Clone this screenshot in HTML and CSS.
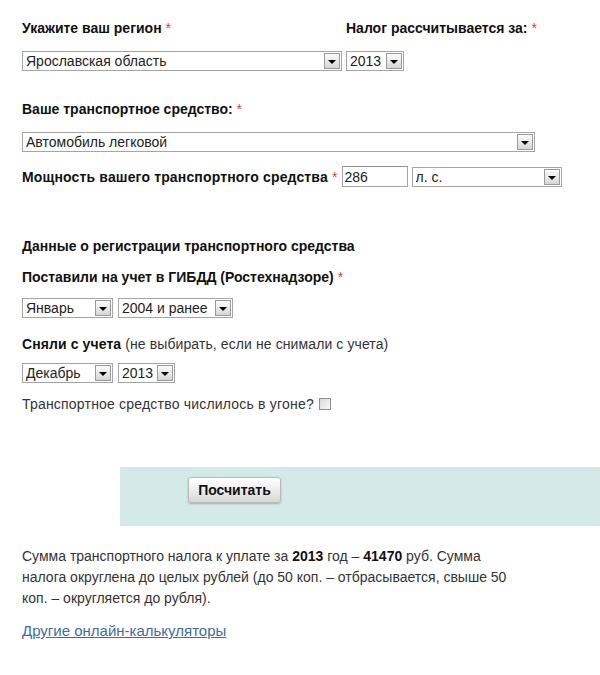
FILE: index.html
```html
<!DOCTYPE html>
<html lang="ru">
<head>
    <meta charset="UTF-8">
    <meta name="viewport" content="width=device-width, initial-scale=1.0">
    <title>Транспортный налог</title>
    <link rel="stylesheet" href="styles.css">
</head>
<body>
    <div class="calc">
        <div class="row-top">
            <div class="field">
                <label class="lbl">Укажите ваш регион <span class="req">*</span></label>
                <span class="sel sel-region">
                    <select><option>Ярославская область</option></select>
                </span>
            </div>
            <div class="field">
                <label class="lbl">Налог рассчитывается за: <span class="req">*</span></label>
                <span class="sel sel-year">
                    <select><option>2013</option></select>
                </span>
            </div>
        </div>

        <div class="field vehicle">
            <label class="lbl">Ваше транспортное средство: <span class="req">*</span></label>
            <span class="sel sel-vehicle">
                <select><option>Автомобиль легковой</option></select>
            </span>
        </div>

        <div class="power">
            <label class="lbl">Мощность вашего транспортного средства <span class="req">*</span></label>
            <input type="text" class="power-input" value="286">
            <span class="sel sel-units">
                <select><option>л. с.</option></select>
            </span>
        </div>

        <div class="lbl reg-title">Данные о регистрации транспортного средства</div>

        <div class="lbl reg-on">Поставили на учет в ГИБДД (Ростехнадзоре) <span class="req">*</span></div>
        <div class="pair">
            <span class="sel sel-month"><select><option>Январь</option></select></span>
            <span class="sel sel-year-long"><select><option>2004 и ранее</option></select></span>
        </div>

        <div class="reg-off"><b class="lbl">Сняли с учета</b> (не выбирать, если не снимали с учета)</div>
        <div class="pair pair-off">
            <span class="sel sel-month"><select><option>Декабрь</option></select></span>
            <span class="sel sel-year-short"><select><option>2013</option></select></span>
        </div>

        <div class="stolen">Транспортное средство числилось в угоне? <input type="checkbox" class="check"></div>
    </div>

    <div class="submit-bar">
        <button class="btn">Посчитать</button>
    </div>

    <div class="result">
        <p class="sum">Сумма транспортного налога к уплате за <b>2013</b> год – <b>41470</b> руб. Сумма налога округлена до целых рублей (до 50 коп. – отбрасывается, свыше 50 коп. – округляется до рубля).</p>
        <a href="#" class="more">Другие онлайн-калькуляторы</a>
    </div>
</body>
</html>
```

FILE: styles.css
```css
body {
    margin: 0;
    font-family: "Liberation Sans", Arial, sans-serif;
    font-size: 14px;
    color: #333;
    background-color: #ffffff;
}
.calc {
    padding: 20px 0 0 22px;
}
.lbl {
    display: block;
    font-weight: bold;
    line-height: 16px;
    color: #111;
}
.req {
    color: #e03c3c;
    font-weight: normal;
}
.row-top {
    display: grid;
    grid-template-columns: 324px auto;
}
.field .lbl {
    margin-bottom: 15px;
}

/* old style select boxes */
.sel {
    position: relative;
    display: inline-block;
    height: 20px;
    box-sizing: border-box;
    vertical-align: top;
}
.sel select {
    appearance: none;
    -webkit-appearance: none;
    width: 100%;
    height: 100%;
    margin: 0;
    padding: 0 0 0 3px;
    border: 1px solid #a5a5a5;
    border-radius: 0;
    background: #fff;
    font-family: "Liberation Sans", Arial, sans-serif;
    font-size: 14px;
    color: #222;
}
.sel::after {
    content: "";
    position: absolute;
    top: 2px;
    right: 2px;
    bottom: 2px;
    width: 14px;
    border: 1px solid #9a9a9a;
    background: linear-gradient(#fbfbfb, #d6d6d6);
    pointer-events: none;
}
.sel::before {
    content: "";
    position: absolute;
    z-index: 1;
    top: 50%;
    right: 6px;
    margin-top: -1px;
    border-left: 4px solid transparent;
    border-right: 4px solid transparent;
    border-top: 4px solid #000;
    pointer-events: none;
}
.sel-region { width: 320px; }
.sel-year { width: 58px; }
.sel-vehicle { width: 513px; }
.sel-units { width: 150px; height: 20px; }
.sel-month { width: 91px; }
.sel-year-long { width: 115px; }
.sel-year-short { width: 57px; }

.vehicle {
    margin-top: 30px;
}
.power {
    display: flex;
    align-items: center;
    margin-top: 14px;
}
.power .lbl {
    margin-right: 4px;
    letter-spacing: 0.15px;
}
.power-input {
    width: 66px;
    height: 21px;
    box-sizing: border-box;
    margin: 0 4px 0 0;
    padding: 0 2px;
    border: 1px solid #a5a5a5;
    border-top-color: #8e8e8e;
    font-family: "Liberation Sans", Arial, sans-serif;
    font-size: 14px;
    color: #222;
}
.reg-title {
    margin-top: 51px;
}
.reg-on {
    margin-top: 15px;
}
.pair {
    display: flex;
    gap: 5px;
    margin-top: 13px;
}
.reg-off {
    margin-top: 18px;
    line-height: 16px;
    letter-spacing: 0.1px;
}
.reg-off .lbl {
    display: inline;
}
.pair-off {
    margin-top: 11px;
}
.stolen {
    margin-top: 13px;
    line-height: 16px;
    letter-spacing: 0.2px;
}
.check {
    appearance: none;
    -webkit-appearance: none;
    width: 12px;
    height: 12px;
    margin: 0 0 0 1px;
    vertical-align: -1px;
    border: 1px solid #8f8f8f;
    background: linear-gradient(135deg, #d8d8d8, #fafafa);
}

.submit-bar {
    margin: 55px 0 0 120px;
    height: 59px;
    padding: 10px 0 0 68px;
    box-sizing: border-box;
    background-color: #d3eae8;
}
.btn {
    width: 93px;
    height: 26px;
    padding: 0;
    border: 1px solid #b9bcbc;
    border-radius: 3px;
    background: linear-gradient(#ffffff, #e9e9e9 60%, #d6d6d6);
    box-shadow: 0 1px 2px rgba(0, 0, 0, 0.25);
    font-family: "Liberation Sans", Arial, sans-serif;
    font-size: 14px;
    font-weight: bold;
    color: #111;
}

.result {
    padding: 20px 0 0 22px;
}
.sum {
    width: 500px;
    margin: 0;
    line-height: 21px;
}
.sum b {
    color: #111;
}
.more {
    display: inline-block;
    margin-top: 11px;
    line-height: 21px;
    font-size: 15px;
    color: #3f6ca3;
}
```
